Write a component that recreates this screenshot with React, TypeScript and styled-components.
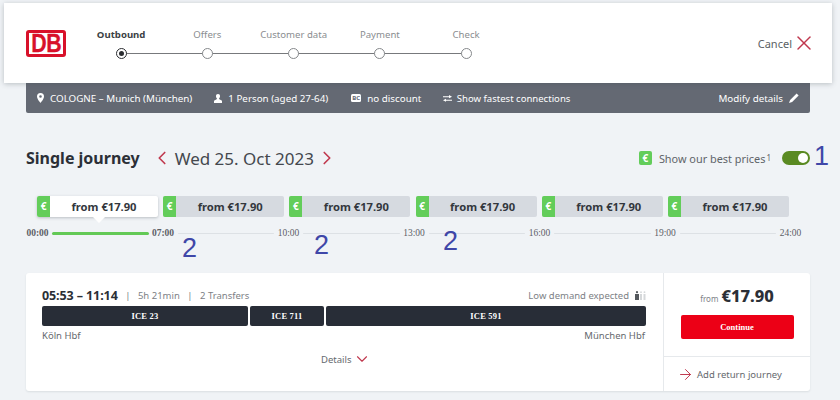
import React from "react";
import styled, { createGlobalStyle } from "styled-components";
import { X, ChevronLeft, ChevronRight, ChevronDown, ArrowRight } from "lucide-react";

const Global = createGlobalStyle`
  html, body { margin: 0; padding: 0; background: #f0f3f6; }
  body { font-family: "Noto Sans", "Open Sans", sans-serif; color: #333; width: 840px; height: 400px; overflow: hidden; }
  * { box-sizing: border-box; }
`;

const Page = styled.div`
  position: relative;
  width: 840px;
  height: 400px;
  padding-top: 3px;
  overflow: hidden;
`;

const Header = styled.header`
  position: relative;
  z-index: 2;
  margin-left: 4px;
  width: 828px;
  height: 80px;
  background: #fff;
  box-shadow: 0 1px 5px rgba(60, 70, 80, 0.3);
  display: flex;
  align-items: center;
  padding: 0 22px;
`;

const Logo = styled.div`
  width: 40px;
  height: 27px;
  border: 3px solid #d8112a;
  border-radius: 3px;
  background: #fff;
  color: #d8112a;
  display: flex;
  align-items: center;
  justify-content: center;
  font-family: "Liberation Sans", sans-serif;
  font-weight: 700;
  font-size: 26px;
  line-height: 21px;
`;

const LogoText = styled.span`
  display: inline-block;
  flex: none;
  letter-spacing: -0.5px;
  transform: scaleX(0.82);
  -webkit-text-stroke: 0.3px #d8112a;
`;

const Stepper = styled.ol`
  list-style: none;
  display: grid;
  grid-template-columns: repeat(5, 86.25px);
  margin: 2px 0 0 12px;
  padding: 0;
`;

const Step = styled.li<{ $last?: boolean }>`
  position: relative;
  display: flex;
  flex-direction: column;
  align-items: center;
  gap: 7px;
  height: 32px;
  &::before {
    content: ${(p) => (p.$last ? "none" : '""')};
    position: absolute;
    left: 50%;
    width: 100%;
    top: 25px;
    height: 1px;
    background: #77797c;
  }
`;

const StepLabel = styled.span<{ $active?: boolean }>`
  font-size: 9.6px;
  line-height: 13px;
  color: ${(p) => (p.$active ? "#3b3f44" : "#8a8d90")};
  font-weight: ${(p) => (p.$active ? 700 : 400)};
  white-space: nowrap;
`;

const Dot = styled.span<{ $active?: boolean }>`
  position: relative;
  z-index: 1;
  width: 11px;
  height: 11px;
  border-radius: 50%;
  background: #fff;
  border: 1.5px solid ${(p) => (p.$active ? "#2b2d31" : "#85888b")};
  &::after {
    content: ${(p) => (p.$active ? '""' : "none")};
    position: absolute;
    inset: 2px;
    border-radius: 50%;
    background: #2b2d31;
  }
`;

const Cancel = styled.div`
  margin-left: auto;
  display: flex;
  align-items: center;
  font-size: 11px;
  color: #5b5f64;
  svg { color: #c0384e; margin-right: -6px; }
`;

const InfoBar = styled.div`
  margin-left: 26px;
  width: 784px;
  height: 30px;
  background: #646973;
  border-radius: 0 0 2px 2px;
  display: flex;
  align-items: center;
  padding: 0 11px;
  color: #fff;
  font-size: 9.8px;
  white-space: nowrap;
`;

const InfoItem = styled.span<{ $ml: number; $size?: number; $gap?: number }>`
  display: inline-flex;
  align-items: center;
  gap: ${(p) => p.$gap ?? 6}px;
  margin-left: ${(p) => p.$ml}px;
  font-size: ${(p) => p.$size ?? 9.8}px;
`;

const CardBadge = styled.span`
  width: 10px;
  height: 8px;
  background: #fff;
  color: #646973;
  border-radius: 1.5px;
  font-size: 6px;
  font-weight: 700;
  line-height: 8px;
  text-align: center;
`;

const Modify = styled.span`
  margin-left: auto;
  display: inline-flex;
  align-items: center;
  gap: 6px;
`;

const TitleRow = styled.div`
  margin: 31px 0 0 26px;
  height: 28px;
  width: 784px;
  display: flex;
  align-items: center;
`;

const Title = styled.h1`
  margin: 0;
  font-size: 16px;
  font-weight: 700;
  color: #2b2f36;
`;

const DateNav = styled.div`
  display: flex;
  align-items: center;
  margin-left: 11px;
  gap: 2px;
  font-size: 17px;
  color: #44484e;
  svg { color: #c0384e; }
`;

const BestPrices = styled.div`
  margin-left: auto;
  display: flex;
  align-items: center;
  font-size: 10.9px;
  color: #5f6469;
  sup { font-size: 8px; line-height: 0; vertical-align: 4px; margin-left: 1px; }
`;

const EuroSquare = styled.span`
  width: 13px;
  height: 14px;
  border-radius: 2px;
  background: #63cd5a;
  color: #fff;
  font-size: 10px;
  font-weight: 700;
  line-height: 14px;
  text-align: center;
  margin-right: 7px;
`;

const Toggle = styled.span`
  position: relative;
  width: 28px;
  height: 14px;
  margin-left: 11px;
  border-radius: 7px;
  background: #5a8a22;
  &::after {
    content: "";
    position: absolute;
    right: 2px;
    top: 2px;
    width: 10px;
    height: 10px;
    border-radius: 50%;
    background: #fff;
  }
`;

const Tabs = styled.div`
  margin: 24px 0 0 37px;
  display: flex;
  gap: 5.2px;
`;

const Tab = styled.div<{ $active?: boolean }>`
  position: relative;
  width: 121px;
  height: 21px;
  display: flex;
  border-radius: 2px;
  background: ${(p) => (p.$active ? "#fff" : "#d6dae0")};
  box-shadow: ${(p) => (p.$active ? "0 1px 3px rgba(60,70,80,.3)" : "none")};
  font-size: 11.2px;
  font-weight: 700;
  color: #33373d;
  &::after {
    content: ${(p) => (p.$active ? '""' : "none")};
    position: absolute;
    left: 55px;
    bottom: -6px;
    width: 0;
    height: 0;
    border-left: 7px solid transparent;
    border-right: 7px solid transparent;
    border-top: 7px solid #fff;
  }
`;

const TabEuro = styled.span`
  width: 13px;
  background: #63cd5a;
  color: #fff;
  border-radius: 2px 0 0 2px;
  font-size: 10px;
  line-height: 21px;
  text-align: center;
`;

const TabText = styled.span`
  flex: 1;
  text-align: center;
  line-height: 22px;
`;

const Timeline = styled.div`
  margin: 9px 0 0 26px;
  width: 776px;
  height: 14px;
  display: flex;
  align-items: center;
  font-family: "Liberation Serif", "DejaVu Serif", serif;
  font-size: 9.5px;
  color: #5c6066;
`;

const TimeLabel = styled.span<{ $bold?: boolean }>`
  width: 23px;
  text-align: center;
  font-weight: ${(p) => (p.$bold ? 700 : 400)};
  flex: none;
`;

const TimeLine = styled.span<{ $green?: boolean }>`
  flex: 1;
  margin: 0 3px;
  height: ${(p) => (p.$green ? 3 : 1)}px;
  border-radius: 2px;
  background: ${(p) => (p.$green ? "#63c956" : "#dde1e5")};
`;

const Card = styled.section`
  margin: 33px 0 0 26px;
  width: 784px;
  height: 118px;
  background: #fff;
  border-radius: 3px;
  box-shadow: 0 1px 2px rgba(60, 70, 80, 0.12);
  display: flex;
`;

const CardMain = styled.div`
  width: 638px;
  padding: 15px 18px 0 16px;
  border-right: 1px solid #e6e9ec;
`;

const MetaRow = styled.div`
  display: flex;
  align-items: center;
  height: 14px;
  font-size: 9.5px;
  color: #7d8186;
`;

const Times = styled.strong`
  font-size: 12.5px;
  color: #2b2f36;
  letter-spacing: -0.1px;
`;

const Sep = styled.span`
  margin: 0 7.5px;
`;

const Demand = styled.span`
  margin-left: auto;
  margin-right: -1px;
  display: inline-flex;
  align-items: center;
  gap: 6px;
`;

const Segments = styled.div`
  display: grid;
  grid-template-columns: 206px 74px 320px;
  gap: 2px;
  margin-top: 4px;
`;

const Segment = styled.div`
  height: 20px;
  border-radius: 2px;
  background: #282d37;
  color: #fff;
  font-family: "Liberation Serif", serif;
  font-weight: 700;
  font-size: 8.5px;
  letter-spacing: 0.2px;
  line-height: 20px;
  text-align: center;
`;

const Stations = styled.div`
  display: flex;
  justify-content: space-between;
  margin-top: 3px;
  font-size: 9.5px;
  line-height: 14px;
  color: #65696e;
`;

const Details = styled.div`
  display: flex;
  justify-content: center;
  align-items: center;
  gap: 1.5px;
  margin-top: 7px;
  padding-left: 5px;
  font-size: 9.5px;
  color: #65696e;
  svg { color: #c0384e; }
`;

const CardSide = styled.div`
  flex: 1;
  display: flex;
  flex-direction: column;
`;

const PriceBox = styled.div`
  height: 84px;
  border-bottom: 1px solid #e6e9ec;
  padding: 0 16px;
  display: flex;
  flex-direction: column;
  align-items: center;
`;

const Price = styled.div`
  margin-top: 14px;
  height: 18px;
  display: flex;
  align-items: baseline;
  gap: 3px;
  font-size: 8px;
  color: #7d8186;
  strong { font-size: 16.5px; font-weight: 800; color: #2b2f36; line-height: 18px; }
`;

const Continue = styled.button`
  margin-top: 10px;
  width: 113px;
  height: 24px;
  border: 0;
  border-radius: 2px;
  background: #ec0016;
  color: #fff;
  font-family: "Liberation Serif", serif;
  font-weight: 700;
  font-size: 8.5px;
`;

const ReturnLink = styled.div`
  flex: 1;
  display: flex;
  align-items: center;
  padding-left: 13px;
  gap: 3px;
  font-size: 9.5px;
  color: #65696e;
  svg { color: #c0384e; }
`;

const Note = styled.span<{ $x: number; $y: number }>`
  position: absolute;
  left: ${(p) => p.$x}px;
  top: ${(p) => p.$y}px;
  z-index: 3;
  font-family: "Liberation Sans", sans-serif;
  font-size: 27px;
  line-height: 27px;
  color: #3f47a8;
`;

const PinIcon = () => (
  <svg width="7" height="10" viewBox="0 0 7 10">
    <path fillRule="evenodd" fill="#fff" d="M3.5 0A3.5 3.5 0 0 0 0 3.5C0 6 3.5 10 3.5 10S7 6 7 3.5A3.5 3.5 0 0 0 3.5 0zm0 2.2a1.3 1.3 0 1 1 0 2.6 1.3 1.3 0 0 1 0-2.6z" />
  </svg>
);

const PersonIcon = () => (
  <svg width="8" height="9" viewBox="0 0 8 9">
    <path fill="#fff" d="M4 0a2 2 0 0 1 2 2.2c0 1-.5 1.9-1 2.3v.6L8 6.8V9H0V6.8l3-1.7v-.6c-.5-.4-1-1.300-1-2.300A2 2 0 0 1 4 0z" />
  </svg>
);

const SwapIcon = () => (
  <svg width="9" height="7" viewBox="0 0 9 7">
    <path fill="#fff" d="M6 0l3 1.700L6 3.300V2.300H0V1.200h6zM3 3.700v1h6v1.100H3v1L0 5.200z" />
  </svg>
);

const PencilIcon = () => (
  <svg width="10" height="10" viewBox="0 0 10 10">
    <path fill="#fff" d="M7.600.4l2 2-6.500 6.500L0 10l1.100-3.100z" />
  </svg>
);

const DemandIcon = () => (
  <svg width="11" height="9" viewBox="0 0 11 9">
    <circle cx="2" cy="1.200" r="1.100" fill="#55595e" />
    <rect x="0" y="3" width="4" height="6" fill="#55595e" />
    <circle cx="6" cy="1.200" r="0.900" fill="#d5d8da" />
    <rect x="5" y="3" width="2" height="6" fill="#d5d8da" />
    <circle cx="9.500" cy="1.200" r="0.900" fill="#d5d8da" />
    <rect x="8.500" y="3" width="2" height="6" fill="#d5d8da" />
  </svg>
);

const steps = ["Outbound", "Offers", "Customer data", "Payment", "Check"];
const times = ["07:00", "10:00", "13:00", "16:00", "19:00", "24:00"];

export default function App() {
  return (
    <Page>
      <Global />
      <Header>
        <Logo>
          <LogoText>DB</LogoText>
        </Logo>
        <Stepper>
          {steps.map((s, i) => (
            <Step key={s} $last={i === steps.length - 1}>
              <StepLabel $active={i === 0}>{s}</StepLabel>
              <Dot $active={i === 0} />
            </Step>
          ))}
        </Stepper>
        <Cancel>
          Cancel <X size={24} strokeWidth={1.5} />
        </Cancel>
      </Header>
      <InfoBar>
        <InfoItem $ml={0}>
          <PinIcon />
          COLOGNE – Munich (München)
        </InfoItem>
        <InfoItem $ml={22}>
          <PersonIcon />1 Person (aged 27-64)
        </InfoItem>
        <InfoItem $ml={23}>
          <CardBadge>BC</CardBadge>no discount
        </InfoItem>
        <InfoItem $ml={21.5} $size={9.55} $gap={5}>
          <SwapIcon />
          Show fastest connections
        </InfoItem>
        <Modify>
          Modify details <PencilIcon />
        </Modify>
      </InfoBar>
      <TitleRow>
        <Title>Single journey</Title>
        <DateNav>
          <ChevronLeft size={22} strokeWidth={1.8} />
          Wed 25. Oct 2023
          <ChevronRight size={22} strokeWidth={1.8} />
        </DateNav>
        <BestPrices>
          <EuroSquare>€</EuroSquare>
          Show our best prices<sup>1</sup>
          <Toggle />
        </BestPrices>
      </TitleRow>
      <Tabs>
        {[0, 1, 2, 3, 4, 5].map((i) => (
          <Tab key={i} $active={i === 0}>
            <TabEuro>€</TabEuro>
            <TabText>from €17.90</TabText>
          </Tab>
        ))}
      </Tabs>
      <Timeline>
        <TimeLabel $bold>00:00</TimeLabel>
        <TimeLine $green />
        {times.map((t, i) => (
          <React.Fragment key={t}>
            <TimeLabel $bold={i === 0}>{t}</TimeLabel>
            {i < times.length - 1 && <TimeLine />}
          </React.Fragment>
        ))}
      </Timeline>
      <Card>
        <CardMain>
          <MetaRow>
            <Times>05:53 – 11:14</Times>
            <Sep>|</Sep>5h 21min<Sep>|</Sep>2 Transfers
            <Demand>
              Low demand expected
              <DemandIcon />
            </Demand>
          </MetaRow>
          <Segments>
            <Segment>ICE 23</Segment>
            <Segment>ICE 711</Segment>
            <Segment>ICE 591</Segment>
          </Segments>
          <Stations>
            <span>Köln Hbf</span>
            <span>München Hbf</span>
          </Stations>
          <Details>
            Details <ChevronDown size={18} strokeWidth={1.5} />
          </Details>
        </CardMain>
        <CardSide>
          <PriceBox>
            <Price>
              from <strong>€17.90</strong>
            </Price>
            <Continue>Continue</Continue>
          </PriceBox>
          <ReturnLink>
            <ArrowRight size={17} strokeWidth={1.4} />
            Add return journey
          </ReturnLink>
        </CardSide>
      </Card>
      <Note $x={814} $y={143}>1</Note>
      <Note $x={182} $y={235}>2</Note>
      <Note $x={314} $y={232}>2</Note>
      <Note $x={443} $y={228}>2</Note>
    </Page>
  );
}
